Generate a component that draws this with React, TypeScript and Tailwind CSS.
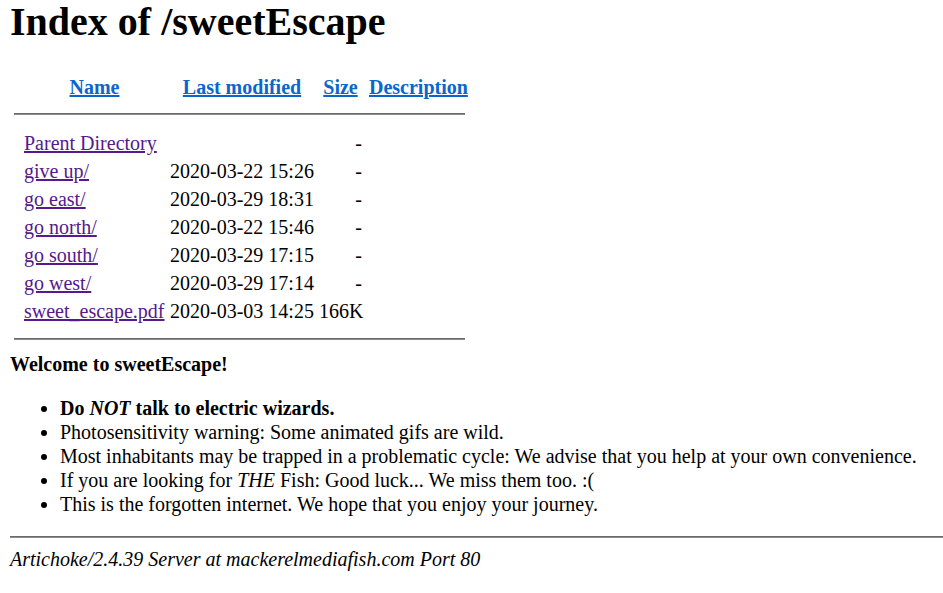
const serif = { fontFamily: '"Liberation Serif", "Times New Roman", serif' };

type Entry = { name: string; modified: string; size: string };

const entries: Entry[] = [
  { name: "Parent Directory", modified: "", size: "-" },
  { name: "give up/", modified: "2020-03-22 15:26", size: "-" },
  { name: "go east/", modified: "2020-03-29 18:31", size: "-" },
  { name: "go north/", modified: "2020-03-22 15:46", size: "-" },
  { name: "go south/", modified: "2020-03-29 17:15", size: "-" },
  { name: "go west/", modified: "2020-03-29 17:14", size: "-" },
  { name: "sweet_escape.pdf", modified: "2020-03-03 14:25", size: "166K" },
];

function Rule({ className = "" }: { className?: string }) {
  return <div className={"h-[2px] border-t border-t-[#6a6a6a] border-b border-b-[#8c8c8c] " + className} />;
}

export default function App() {
  return (
    <div style={serif} className="min-h-[593px] bg-white pl-[10px] text-[20px] text-black">
      <h1 className="pt-[2px] text-[40px] font-bold leading-[40px]">Index of /sweetEscape</h1>

      <div className="mt-[31px]">
        {/* header row */}
        <div className="flex h-[28px] leading-[28px] font-bold">
          <div className="w-[14px]" />
          <div className="w-[141px] text-center">
            <a href="#" className="text-[#0b66cc] underline">Name</a>
          </div>
          <div className="ml-[5px] w-[144px] text-center">
            <a href="#" className="text-[#0b66cc] underline">Last modified</a>
          </div>
          <div className="ml-[5px] w-[43px] text-center">
            <a href="#" className="text-[#0b66cc] underline">Size</a>
          </div>
          <div className="ml-[7px] whitespace-nowrap">
            <a href="#" className="text-[#0b66cc] underline">Description</a>
          </div>
        </div>

        <div className="h-[28px] pt-[12px]">
          <Rule className="ml-[4px] w-[451px]" />
        </div>

        {entries.map((e) => (
          <div key={e.name} className="flex h-[28px] leading-[28px] whitespace-nowrap">
            <div className="w-[14px]" />
            <div className="w-[141px]">
              <a href="#" className="text-[#551a8b] underline">{e.name}</a>
            </div>
            <div className="ml-[5px] w-[144px]">{e.modified}</div>
            <div className="ml-[5px] w-[43px] text-right">{e.size}</div>
          </div>
        ))}

        <div className="h-[27px] pt-[13px]">
          <Rule className="ml-[4px] w-[451px]" />
        </div>
      </div>

      <p className="font-bold leading-[24px]">Welcome to sweetEscape!</p>

      <ul className="mt-[20px] list-disc pl-[50px] leading-[24px]">
        <li className="font-bold">
          Do <i>NOT</i> talk to electric wizards.
        </li>
        <li>Photosensitivity warning: Some animated gifs are wild.</li>
        <li>Most inhabitants may be trapped in a problematic cycle: We advise that you help at your own convenience.</li>
        <li>
          If you are looking for <i>THE</i> Fish: Good luck... We miss them too. :(
        </li>
        <li>This is the forgotten internet. We hope that you enjoy your journey.</li>
      </ul>

      <Rule className="mt-[20px] w-full" />

      <address className="mt-[9px] italic leading-[24px]">
        Artichoke/2.4.39 Server at mackerelmediafish.com Port 80
      </address>
    </div>
  );
}
